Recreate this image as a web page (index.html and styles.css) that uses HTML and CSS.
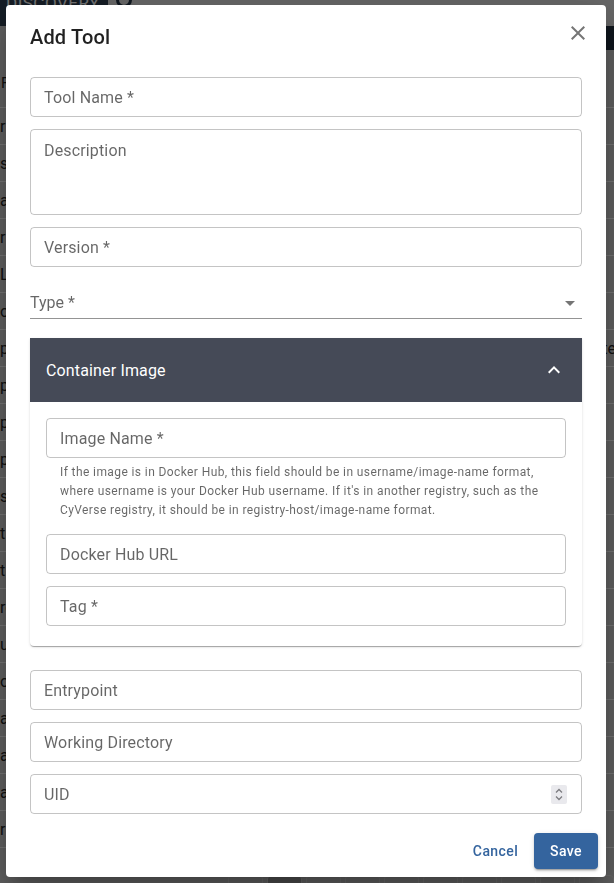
FILE: index.html
```html
<!DOCTYPE html>
<html lang="en">
<head>
<meta charset="utf-8">
<title>Add Tool</title>
<link rel="stylesheet" href="styles.css">
</head>
<body>
<div class="page">
  <div class="appbar">
    <div class="brand">DISCOVERY</div>
    <div class="appbar-rest"><span class="help-dot"></span></div>
  </div>
  <div class="toolbar"><div class="toolbar-fill"></div><div class="toolbar-dark"></div></div>
  <div class="table">
    <div class="thead">F</div>
    <div class="row"><span>r</span></div>
    <div class="row"><span>s</span></div>
    <div class="row"><span>a</span></div>
    <div class="row"><span>r</span></div>
    <div class="row"><span>LL</span></div>
    <div class="row"><span>oc</span></div>
    <div class="row"><span>p</span><span class="right">te</span></div>
    <div class="row"><span>p</span></div>
    <div class="row"><span>p</span></div>
    <div class="row"><span>p</span></div>
    <div class="row"><span>sc</span></div>
    <div class="row"><span>t</span></div>
    <div class="row"><span>t</span></div>
    <div class="row"><span>ro</span></div>
    <div class="row"><span>us</span></div>
    <div class="row"><span>oc</span></div>
    <div class="row"><span>al</span></div>
    <div class="row"><span>al</span></div>
    <div class="row"><span>al</span></div>
    <div class="row"><span>r</span></div>
  </div>
  <div class="pager">
    <span class="pg">&lsaquo;</span><span class="pg sel">1</span><span class="pg">2</span><span class="pg">3</span><span class="pg">4</span><span class="pg">5</span><span class="pg">…</span><span class="pg">9</span><span class="pg">&rsaquo;</span><span class="pg">100</span>
  </div>
</div>

<div class="overlay">
  <div class="dialog">
    <div class="dialog-title">Add Tool</div>
    <button class="close-btn" type="button" aria-label="close">
      <svg viewBox="0 0 24 24" width="24" height="24"><path d="M19 6.41 17.59 5 12 10.59 6.41 5 5 6.41 10.59 12 5 17.59 6.41 19 12 13.41 17.59 19 19 17.59 13.41 12z"/></svg>
    </button>
    <div class="dialog-content">
      <div class="field">Tool Name *</div>
      <div class="field field-multi">Description</div>
      <div class="field">Version *</div>
      <div class="select">
        <span class="select-label">Type *</span>
        <svg class="select-arrow" viewBox="0 0 24 24" width="24" height="24"><path d="M7 10l5 5 5-5z"/></svg>
      </div>
      <div class="accordion">
        <div class="acc-head">
          <span>Container Image</span>
          <svg viewBox="0 0 24 24" width="24" height="24"><path d="m12 8-6 6 1.41 1.41L12 10.83l4.59 4.58L18 14z"/></svg>
        </div>
        <div class="acc-body">
          <div class="field field-first">Image Name *</div>
          <p class="helper">If the image is in Docker Hub, this field should be in username/image-name format, where username is your Docker Hub username. If it's in another registry, such as the CyVerse registry, it should be in registry-host/image-name format.</p>
          <div class="field field-after-helper">Docker Hub URL</div>
          <div class="field">Tag *</div>
        </div>
      </div>
      <div class="field field-after-acc">Entrypoint</div>
      <div class="field">Working Directory</div>
      <div class="field field-number">
        <span>UID</span>
        <span class="spinner">
          <svg viewBox="0 0 16 19" width="16" height="19"><polyline points="5,7.5 8,4.5 11,7.5"/><polyline points="5,11.5 8,14.5 11,11.5"/></svg>
        </span>
      </div>
    </div>
    <div class="dialog-actions">
      <button class="btn btn-text" type="button">Cancel</button>
      <button class="btn btn-contained" type="button">Save</button>
    </div>
  </div>
</div>
</body>
</html>
```

FILE: styles.css
```css
* { box-sizing: border-box; }

html, body {
  margin: 0;
  padding: 0;
  width: 614px;
  height: 883px;
  overflow: hidden;
}

body {
  font-family: Roboto, "Noto Sans", "Liberation Sans", sans-serif;
  background: #c0c0c0;
}

/* ---------- background page ---------- */
.page {
  width: 614px;
  color: #222;
  font-size: 14px;
}

.appbar {
  display: flex;
  height: 26px;
}

.brand {
  width: 108px;
  background: #2c3b4b;
  color: #e6e6e6;
  font-size: 17px;
  line-height: 6px;
  padding-left: 6px;
  letter-spacing: 0.5px;
}

.appbar-rest {
  flex: 1;
  background: #cfcfcf;
  padding-left: 8px;
}

.help-dot {
  display: block;
  width: 16px;
  height: 16px;
  margin-top: -8px;
  border-radius: 50%;
  border: 3px solid #203040;
}

.toolbar {
  display: flex;
  height: 24px;
}

.toolbar-fill { flex: 1; background: #c0c0c0; }
.toolbar-dark { width: 60px; background: #1f2c3a; }

.table {
  display: flex;
  flex-direction: column;
}

.thead {
  height: 58px;
  line-height: 66px;
  font-size: 15px;
  border-bottom: 1px solid #e8e8e8;
  padding-left: 1px;
}

.row {
  height: 37px;
  display: flex;
  justify-content: space-between;
  align-items: center;
  border-bottom: 1px solid #e8e8e8;
  font-size: 16px;
}

.row .right { margin-right: -2px; }

.pager {
  display: flex;
  gap: 4px;
  padding: 27px 0 0 228px;
  font-size: 15px;
  color: #333;
}

.pg {
  flex: none;
  width: 35px;
  height: 30px;
  text-align: center;
  border: 1px solid #d0d0d0;
  border-radius: 4px;
  line-height: 30px;
}

.pg.sel { background: #9a9a9a; }

/* ---------- overlay & dialog ---------- */
.overlay {
  position: fixed;
  inset: 0;
  background: rgba(0, 0, 0, 0.5);
}

.dialog {
  position: relative;
  margin: 5px 0 0 6px;
  width: 600px;
  height: 872px;
  background: #fff;
  border-radius: 4px;
  display: flex;
  flex-direction: column;
  box-shadow: 0 11px 15px -7px rgba(0,0,0,0.2), 0 24px 38px 3px rgba(0,0,0,0.14), 0 9px 46px 8px rgba(0,0,0,0.12);
  color: rgba(0, 0, 0, 0.87);
}

.dialog-title {
  padding: 16px 24px;
  font-size: 20px;
  font-weight: 500;
  line-height: 32px;
  letter-spacing: 0.0075em;
}

.close-btn {
  position: absolute;
  top: 8px;
  right: 8px;
  width: 40px;
  height: 40px;
  padding: 8px;
  border: 0;
  background: transparent;
  display: flex;
}

.close-btn svg { fill: rgba(0, 0, 0, 0.54); }

.dialog-content {
  flex: 1;
  padding: 0 24px;
  display: flex;
  flex-direction: column;
}

.field {
  height: 40px;
  margin-top: 12px;
  border: 1px solid rgba(0, 0, 0, 0.23);
  border-radius: 4px;
  padding: 1px 13px 0;
  font-size: 16px;
  line-height: 37px;
  color: rgba(0, 0, 0, 0.6);
  letter-spacing: 0.00938em;
}

.dialog-content > .field:first-child { margin-top: 8px; }

.field-multi {
  height: 86px;
  padding-top: 8.5px;
  line-height: 23px;
}

.select {
  height: 40px;
  margin-top: 12px;
  border-bottom: 1px solid rgba(0, 0, 0, 0.42);
  display: flex;
  justify-content: space-between;
  align-items: flex-end;
  font-size: 16px;
  color: rgba(0, 0, 0, 0.6);
}

.select-label {
  line-height: 23px;
  padding-bottom: 4px;
}

.select-arrow {
  fill: rgba(0, 0, 0, 0.54);
  margin-bottom: 3px;
}

.accordion {
  margin-top: 19px;
  background: #fff;
  border-radius: 0 0 4px 4px;
  box-shadow: 0 2px 1px -1px rgba(0,0,0,0.2), 0 1px 1px 0 rgba(0,0,0,0.14), 0 1px 3px 0 rgba(0,0,0,0.12);
}

.acc-head {
  height: 64px;
  background: #454a57;
  color: #fff;
  display: flex;
  justify-content: space-between;
  align-items: center;
  padding: 0 16px;
  font-size: 16px;
  letter-spacing: 0.00938em;
}

.acc-head svg { fill: #fff; }

.acc-body {
  padding: 16px 16px 20px;
  display: flex;
  flex-direction: column;
}

.acc-body .field-first { margin-top: 0; }

.helper {
  margin: 5px 14px 0;
  font-size: 12px;
  line-height: 19px;
  letter-spacing: 0.03333em;
  color: rgba(0, 0, 0, 0.6);
}

.acc-body .field-after-helper { margin-top: 14px; }

.field-after-acc { margin-top: 24px; }

.field-number {
  display: flex;
  justify-content: space-between;
  align-items: center;
  padding-right: 14px;
}

.spinner {
  width: 16px;
  height: 19px;
  margin-top: -1px;
  background: #e9e9ed;
  border-radius: 2px;
  display: flex;
}

.spinner polyline {
  fill: none;
  stroke: #7c7c80;
  stroke-width: 1.3;
}

.dialog-actions {
  display: flex;
  justify-content: flex-end;
  gap: 8px;
  padding: 0 8px 8px;
}

.btn {
  height: 36px;
  border: 0;
  border-radius: 4px;
  font-family: Roboto, "Noto Sans", sans-serif;
  font-size: 14px;
  font-weight: 500;
  line-height: 24px;
  letter-spacing: 0.02857em;
  cursor: pointer;
}

.btn-text {
  padding: 6px 8px;
  background: transparent;
  color: #34649e;
}

.btn-contained {
  padding: 6px 16px;
  background: #34649e;
  color: #fff;
  box-shadow: 0 3px 1px -2px rgba(0,0,0,0.2), 0 2px 2px 0 rgba(0,0,0,0.14), 0 1px 5px 0 rgba(0,0,0,0.12);
}
```
